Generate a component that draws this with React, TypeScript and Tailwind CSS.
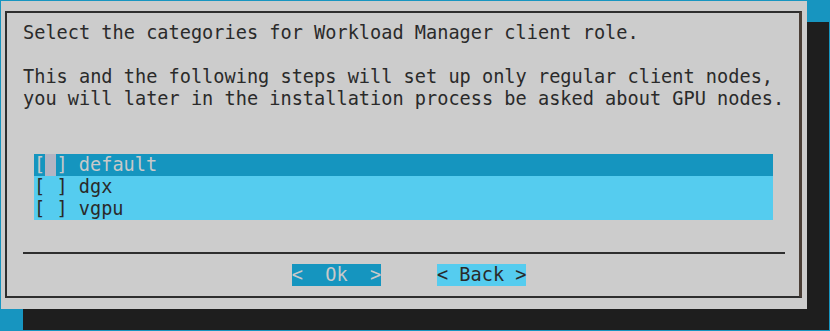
import React from "react";

export default function App() {
  return (
    <div
      className="w-[830px] h-[331px] bg-[#1795c0] pt-px pl-px overflow-hidden text-[18.6px] leading-[22px] text-[#2a2a2a]"
      style={{ fontFamily: '"DejaVu Sans Mono", monospace' }}
    >
      <div className="w-[806px] h-[308px] bg-[#cccccc] shadow-[22px_21px_0_0_#1e1e1e] pt-[10px] pl-[4px]">
        <div className="w-[797px] h-[287px] border-2 border-[#2e2e2e] border-r-[3px] border-r-[#4a3e36] pt-[9px] pl-[16px] flex flex-col">
          <div className="h-[22px] whitespace-pre">Select the categories for Workload Manager client role.</div>
          <div className="h-[22px]" />
          <div className="h-[22px] whitespace-pre">This and the following steps will set up only regular client nodes,</div>
          <div className="h-[22px] whitespace-pre">you will later in the installation process be asked about GPU nodes.</div>
          <div className="h-[44px]" />
          <div className="ml-[11px] w-[739px] flex flex-col">
            <div className="h-[22px] bg-[#1595bf] text-[#c9c9c9] whitespace-pre flex">
              <span>[</span>
              <span className="bg-[#b4b5c3] text-[#b4b5c3]"> </span>
              <span>] default</span>
            </div>
            <div className="h-[22px] bg-[#55ccef] whitespace-pre">[ ] dgx</div>
            <div className="h-[22px] bg-[#55ccef] whitespace-pre">[ ] vgpu</div>
          </div>
          <div className="h-[22px]" />
          <div className="h-[22px] flex items-center">
            <div className="w-[762px] h-[2px] bg-[#2e2e2e]" />
          </div>
          <div className="h-[22px] flex pl-[268.7px] gap-[55.9px]">
            <div className="w-[89.4px] h-[22px] bg-[#1595bf] text-[#c9c9c9] whitespace-pre">{"<  Ok  >"}</div>
            <div className="w-[89.4px] h-[22px] bg-[#55ccef] whitespace-pre">{"< Back >"}</div>
          </div>
        </div>
      </div>
    </div>
  );
}
